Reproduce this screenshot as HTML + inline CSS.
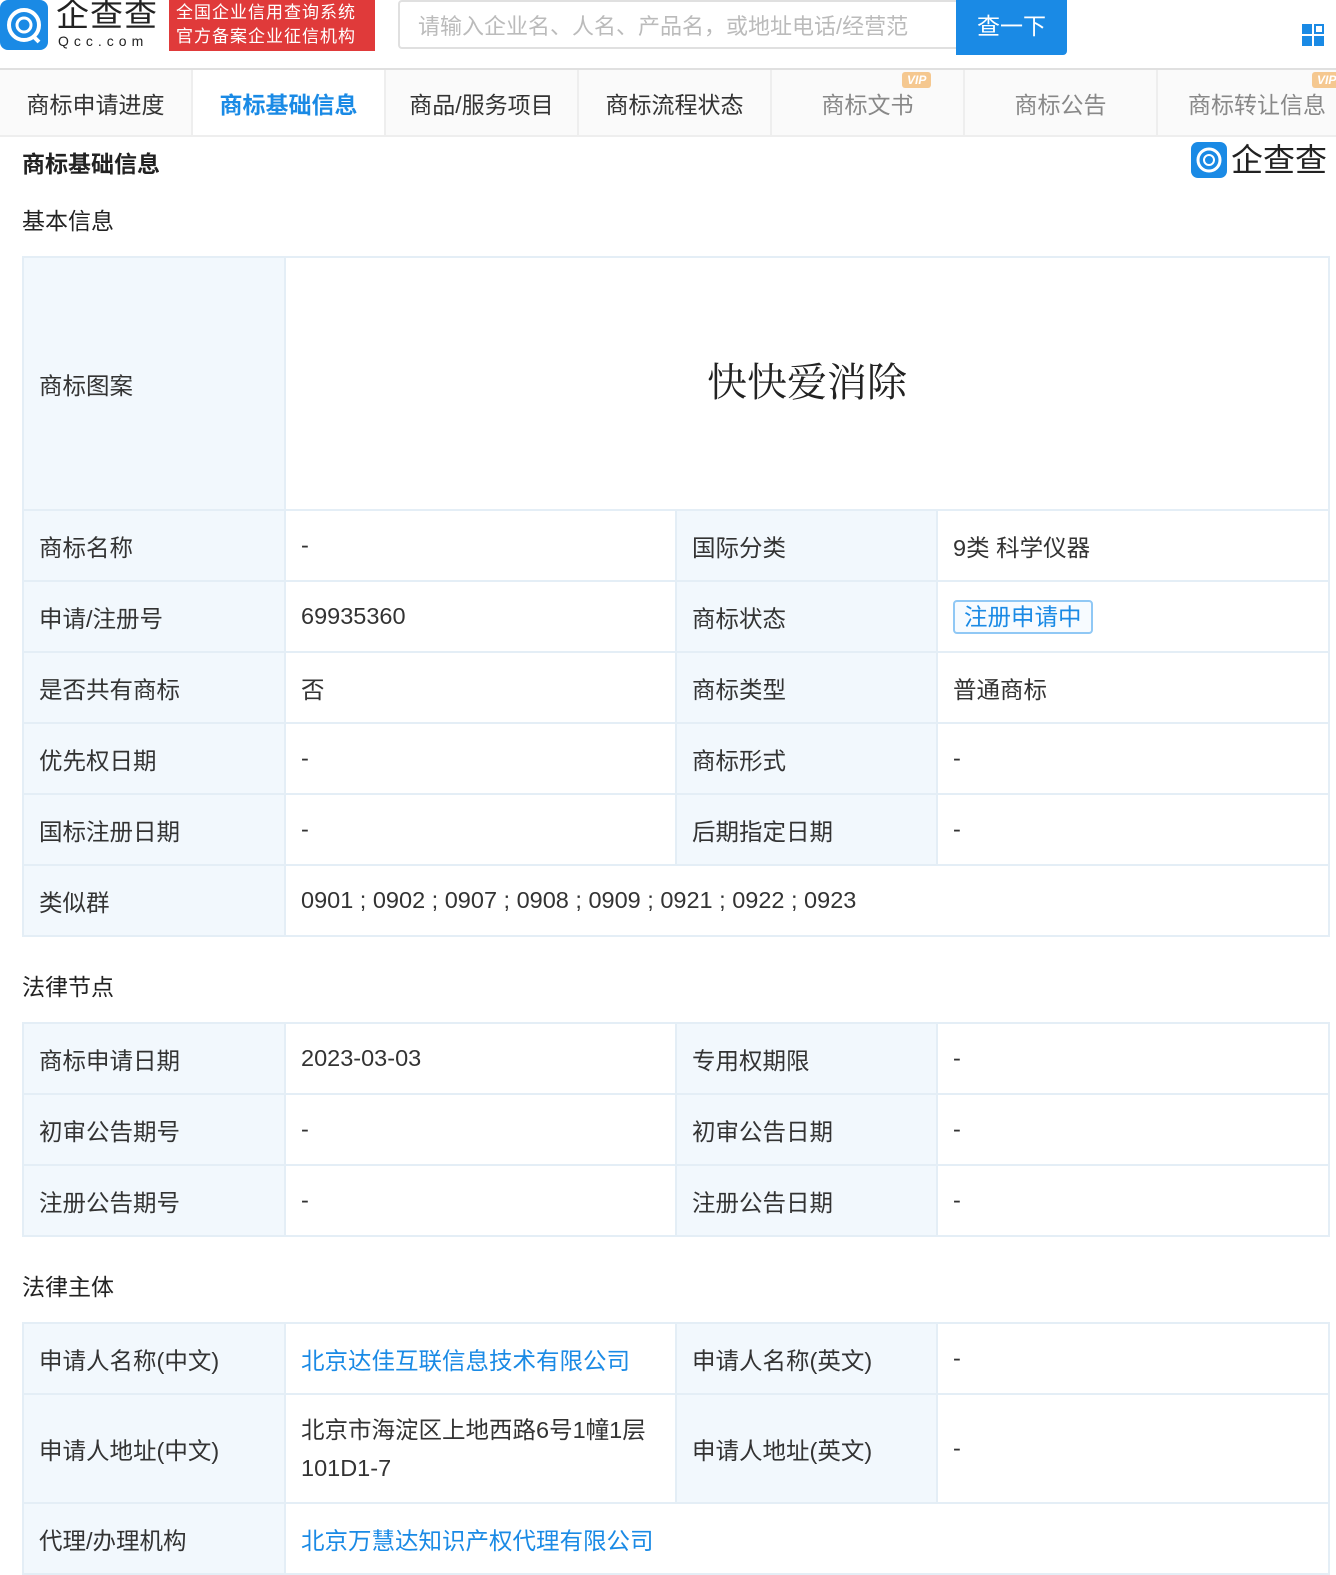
<!DOCTYPE html>
<html><head><meta charset="utf-8"><style>
*{margin:0;padding:0;box-sizing:border-box}
body{width:1336px;height:1574px;overflow:hidden;background:#fff;font-family:"Liberation Sans","Noto Sans CJK SC",sans-serif;color:#333;position:relative}
.hdr{position:absolute;left:0;top:0;width:1336px;height:70px;border-bottom:2px solid #e0e0e0;background:#fff}
.logo{position:absolute;left:0;top:0;width:48px;height:50px;background:#1a8ae5;border-radius:8px}
.tabs{position:absolute;top:70px;left:0;width:1336px;height:67px;background:#fafafa;border-bottom:2px solid #eee;display:flex}
.tab{width:193px;border-right:2px solid #eee;font-size:23px;color:#333;text-align:center;line-height:70px;position:relative;flex-shrink:0}
.tab.g{color:#888}
.tab.a{background:#fff;color:#1a8ae5;font-weight:bold}
.vip{position:absolute;top:2px;font-size:12px;font-style:italic;font-weight:bold;color:#fff;background:#f5c890;line-height:16px;padding:0 5px;border-radius:3px}
h3{position:absolute;font-size:23px;font-weight:normal;color:#222}
table{position:absolute;left:22px;width:1306px;border-collapse:collapse;font-size:23.5px;table-layout:fixed}
td{border:2px solid #e4eef6;padding:0 15px;color:#333}
td.l{background:#f2f8fd}
a{color:#1a8ae5;text-decoration:none}
.tag{display:inline-block;border:2px solid #90c8f5;border-radius:4px;color:#1a8ae5;padding:0 9px;line-height:30px;background:#f7fbff}
</style></head><body>
<div class="hdr">
 <div class="logo"><svg width="48" height="50" viewBox="0 0 48 50"><circle cx="24" cy="25" r="15" fill="none" stroke="#fff" stroke-width="4"/><circle cx="24" cy="25" r="7" fill="none" stroke="#fff" stroke-width="3"/><path d="M33 36l6 6" stroke="#fff" stroke-width="4"/></svg></div>
 <div style="position:absolute;left:56px;top:-3px;font-size:33px;line-height:36px;color:#222;letter-spacing:1px">企查查</div>
 <div style="position:absolute;left:58px;top:33px;font-size:14px;line-height:16px;color:#222;letter-spacing:5px">Qcc.com</div>
 <div style="position:absolute;left:169px;top:0;width:206px;height:51px;background:#e03a3a;color:#fff;font-size:17px;line-height:24px;padding:1px 0 0 7px;letter-spacing:1px">全国企业信用查询系统<br>官方备案企业征信机构</div>
 <div style="position:absolute;left:398px;top:0;width:560px;height:49px;border:2px solid #e0e0e0;border-right:none;border-radius:4px 0 0 4px;font-size:22px;color:#bbb;line-height:50px;padding-left:18px;white-space:nowrap;overflow:hidden">请输入企业名、人名、产品名，或地址电话/经营范</div>
 <div style="position:absolute;left:956px;top:0;width:111px;height:55px;background:#1a8ae5;border-radius:0 0 4px 0;color:#fff;font-size:23px;text-align:center;line-height:52px">查一下</div>
 <svg style="position:absolute;left:1302px;top:24px" width="22" height="22"><rect x="0" y="0" width="10" height="10" fill="#1a8ae5"/><rect x="13" y="1" width="8" height="8" fill="none" stroke="#1a8ae5" stroke-width="2"/><rect x="0" y="12" width="10" height="10" fill="#1a8ae5"/><rect x="12" y="12" width="10" height="10" fill="#1a8ae5"/></svg>
</div>
<div class="tabs">
 <div class="tab">商标申请进度</div><div class="tab a">商标基础信息</div><div class="tab">商品/服务项目</div><div class="tab">商标流程状态</div>
 <div class="tab g">商标文书<span class="vip" style="left:130px">VIP</span></div><div class="tab g">商标公告</div><div class="tab g" style="width:200px">商标转让信息<span class="vip" style="left:154px">VIP</span></div>
</div>
<div style="position:absolute;left:22px;top:145px;font-size:23px;font-weight:bold;color:#222">商标基础信息</div>
<div style="position:absolute;left:1191px;top:142px;width:36px;height:36px;background:#1a8ae5;border-radius:7px"><svg width="36" height="36"><circle cx="18" cy="18" r="11" fill="none" stroke="#fff" stroke-width="3"/><circle cx="18" cy="18" r="5" fill="none" stroke="#fff" stroke-width="2"/></svg></div>
<div style="position:absolute;left:1231px;top:140px;font-size:32px;line-height:40px;color:#222">企查查</div>
<h3 style="left:22px;top:202px">基本信息</h3>
<table style="top:256px">
<colgroup><col style="width:262px"><col style="width:391px"><col style="width:261px"><col style="width:392px"></colgroup>
<tr style="height:253px"><td class="l">商标图案</td><td colspan="3" style="text-align:center"><span style="font-size:40px;font-family:'Noto Serif CJK SC',serif;color:#222;position:relative;top:-4px">快快爱消除</span></td></tr>
<tr style="height:71px"><td class="l">商标名称</td><td>-</td><td class="l">国际分类</td><td>9类 科学仪器</td></tr>
<tr style="height:71px"><td class="l">申请/注册号</td><td>69935360</td><td class="l">商标状态</td><td><span class="tag">注册申请中</span></td></tr>
<tr style="height:71px"><td class="l">是否共有商标</td><td>否</td><td class="l">商标类型</td><td>普通商标</td></tr>
<tr style="height:71px"><td class="l">优先权日期</td><td>-</td><td class="l">商标形式</td><td>-</td></tr>
<tr style="height:71px"><td class="l">国标注册日期</td><td>-</td><td class="l">后期指定日期</td><td>-</td></tr>
<tr style="height:71px"><td class="l">类似群</td><td colspan="3">0901 ; 0902 ; 0907 ; 0908 ; 0909 ; 0921 ; 0922 ; 0923</td></tr>
</table>
<h3 style="left:22px;top:968px">法律节点</h3>
<table style="top:1022px">
<colgroup><col style="width:262px"><col style="width:391px"><col style="width:261px"><col style="width:392px"></colgroup>
<tr style="height:71px"><td class="l">商标申请日期</td><td>2023-03-03</td><td class="l">专用权期限</td><td>-</td></tr>
<tr style="height:71px"><td class="l">初审公告期号</td><td>-</td><td class="l">初审公告日期</td><td>-</td></tr>
<tr style="height:71px"><td class="l">注册公告期号</td><td>-</td><td class="l">注册公告日期</td><td>-</td></tr>
</table>
<h3 style="left:22px;top:1268px">法律主体</h3>
<table style="top:1322px">
<colgroup><col style="width:262px"><col style="width:391px"><col style="width:261px"><col style="width:392px"></colgroup>
<tr style="height:71px"><td class="l">申请人名称(中文)</td><td><a>北京达佳互联信息技术有限公司</a></td><td class="l">申请人名称(英文)</td><td>-</td></tr>
<tr style="height:109px"><td class="l">申请人地址(中文)</td><td style="line-height:38px">北京市海淀区上地西路6号1幢1层101D1-7</td><td class="l">申请人地址(英文)</td><td>-</td></tr>
<tr style="height:71px"><td class="l">代理/办理机构</td><td colspan="3"><a>北京万慧达知识产权代理有限公司</a></td></tr>
</table>
</body></html>
